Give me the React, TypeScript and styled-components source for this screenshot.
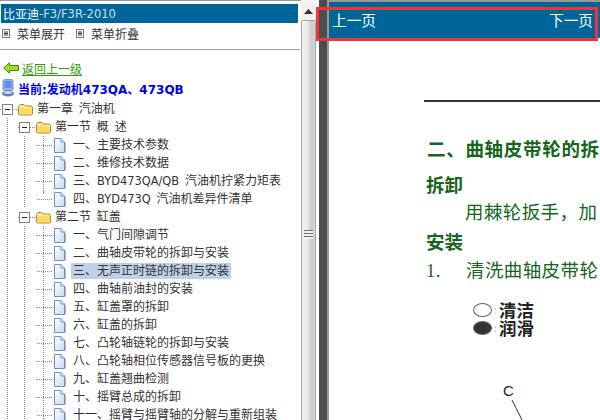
import React from "react";
import styled, { createGlobalStyle } from "styled-components";

const cjk = `"DejaVu Sans", "Noto Sans CJK SC", sans-serif`;
const pageFont = `"Liberation Serif", "Noto Sans CJK SC", serif`;
const dots = `linear-gradient(#8a8a8a 50%, transparent 50%)`;

const Global = createGlobalStyle`
  html, body { margin: 0; padding: 0; background: #fff; }
  a { color: inherit; }
`;

const Frame = styled.div`
  position: relative;
  display: flex;
  width: 600px;
  height: 420px;
  overflow: hidden;
  background: #fff;
  font: 12px ${cjk};
  color: #333;
`;

const Side = styled.div`
  flex: none;
  width: 301px;
  height: 420px;
  overflow: hidden;
  border-top: 1px solid #999;
  box-sizing: border-box;
`;

const TitleBar = styled.div`
  display: flex;
  align-items: center;
  height: 19px;
  margin: 3px 3px 0 1px;
  padding-left: 2px;
  background: #006699;
  color: #fff;
`;

const TitleLatin = styled.span`
  font-size: 11.5px;
  color: #cfe0ea;
`;

const MenuBar = styled.div`
  display: flex;
  align-items: center;
  height: 18px;
  margin-top: 1px;
  padding-left: 2px;
`;

const MenuItem = styled.span`
  display: flex;
  align-items: center;
  gap: 7px;
  margin-right: 11px;
`;

const Rule = styled.hr`
  height: 1px;
  margin: 7px 1px 0 0;
  border: 0;
  background: #a0a0a0;
`;

const BackRow = styled.div`
  display: flex;
  align-items: center;
  gap: 3px;
  height: 18px;
  margin-top: 9px;
  padding-left: 3px;
`;

const BackLink = styled.a`
  color: #339900;
  text-decoration: underline;
`;

const Current = styled.div`
  display: flex;
  align-items: center;
  gap: 3px;
  height: 18px;
  margin-top: 2px;
  padding-left: 1px;
  color: #0000ee;
  font-weight: 700;
`;

const Tree = styled.div`
  display: flex;
  flex-direction: column;
  margin-top: 3px;
`;

const Row = styled.div`
  display: flex;
  align-items: center;
  height: 18px;
  white-space: nowrap;
`;

const Guide = styled.span<{ $x: number }>`
  flex: none;
  align-self: stretch;
  width: 18px;
  background-image: ${dots};
  background-size: 1px 2px;
  background-repeat: repeat-y;
  background-position: ${(p) => p.$x}px 0;
`;

const Branch = styled.span<{ $last?: boolean }>`
  flex: none;
  align-self: stretch;
  width: 17px;
  background-image: ${dots}, linear-gradient(90deg, #8a8a8a 50%, transparent 50%);
  background-size: 1px 2px, 2px 1px;
  background-repeat: repeat-y, repeat-x;
  background-position: 7px 0, 7px 9px;
  ${(p) =>
    p.$last &&
    `background-size: 1px 9px, 2px 1px;
     background-repeat: no-repeat, repeat-x;`}
`;

const Expander = styled.span<{ $x: number }>`
  flex: none;
  display: flex;
  align-items: center;
  align-self: stretch;
  width: 18px;
  padding-left: ${(p) => p.$x}px;
  box-sizing: border-box;
  background-image: linear-gradient(90deg, #8a8a8a 50%, transparent 50%);
  background-size: 2px 1px;
  background-repeat: repeat-x;
  background-position: 0 9px;
`;

const Box = styled.span`
  position: relative;
  display: block;
  width: 9px;
  height: 9px;
  background: #fff;
  border: 1px solid #808080;
  &::after {
    content: "";
    position: absolute;
    left: 2px;
    top: 4px;
    width: 5px;
    height: 1px;
    background: #222;
  }
`;

const Label = styled.span<{ $on?: boolean; $gap?: number }>`
  display: inline-block;
  height: 16px;
  line-height: 16px;
  padding: 0 2px;
  margin-left: ${(p) => p.$gap ?? 5}px;
  word-spacing: 2px;
  background: ${(p) => (p.$on ? "#bfd0ea" : "transparent")};
`;

const Latin = styled.span`
  font-size: 11.4px;
`;

const Scrollbar = styled.div`
  flex: none;
  display: flex;
  flex-direction: column;
  width: 15px;
  height: 420px;
  padding-top: 3px;
  box-sizing: border-box;
  background: #f4f4f4;
`;

const ScrollButton = styled.div`
  display: flex;
  align-items: center;
  justify-content: center;
  flex: none;
  height: 17px;
  background: #f1f1f1;
`;

const Thumb = styled.div`
  flex: none;
  display: flex;
  align-items: center;
  justify-content: center;
  height: 428px;
  box-sizing: border-box;
  border: 1px solid #a6a6a6;
  border-radius: 2px 2px 0 0;
  background: linear-gradient(90deg, #f2f2f2 0%, #eaeaea 40%, #c9c9c9 75%, #d8d8d8 100%);
`;

const Grip = styled.div`
  width: 9px;
  height: 9px;
  background: repeating-linear-gradient(#6f6f6f 0 1px, #f2f2f2 1px 3px);
`;

const Divider = styled.div`
  flex: none;
  width: 8px;
  height: 420px;
  margin-left: 3px;
  background: #4d4d4d;
  border-right: 2px solid #9a9a9a;
`;

const Reader = styled.div`
  flex: 1;
  min-width: 0;
  height: 420px;
  overflow: hidden;
  white-space: nowrap;
  box-sizing: border-box;
  border-top: 2px solid #999;
`;

const PageBar = styled.div`
  display: flex;
  align-items: flex-start;
  justify-content: space-between;
  height: 36px;
  padding: 8px 7px 0 3px;
  box-sizing: border-box;
  background: #006699;
  color: #fff;
  font: 14.67px "Noto Sans CJK SC", sans-serif;
  line-height: 20px;
`;

const Sheet = styled.div`
  padding: 62px 0 0 95px;
  color: #14661a;
  font: 18.5px/26px ${pageFont};
`;

const TopLine = styled.div`
  height: 2px;
  background: #333;
`;

const Heading = styled.div`
  margin-top: 35px;
  font-weight: 700;
  height: 26px;
  padding-left: 3px;
  letter-spacing: 0.7px;
`;

const SubHeading = styled.div`
  margin-top: 10px;
  height: 26px;
  font-weight: 700;
  padding-left: 2px;
`;

const Para = styled.div`
  height: 20px;
  padding-left: 41px;
  margin-top: 1px;
  letter-spacing: 0.4px;
`;

const Step = styled.div`
  display: flex;
  height: 28px;
  margin-top: 2px;
  padding-left: 2px;
  letter-spacing: 0.4px;
`;

const StepNo = styled.span`
  width: 40px;
`;

const Legend = styled.div`
  display: flex;
  flex-direction: column;
  margin: 15px 0 0 49px;
  color: #222;
  font: 700 17.5px/18px "Noto Sans CJK SC", sans-serif;
`;

const LegendRow = styled.div`
  display: flex;
  align-items: center;
  height: 18px;
`;

const Dot = styled.span<{ $filled?: boolean }>`
  flex: none;
  width: 17px;
  height: 12px;
  border: 1px solid #666;
  border-radius: 50%;
  background: ${(p) => (p.$filled ? "#333" : "#fff")};
`;

const Colon = styled.span`
  width: 7px;
  text-align: center;
  color: #aaa;
  font-size: 10px;
  font-weight: 400;
`;

const Callout = styled.svg`
  display: block;
  margin: 45px 0 0 79px;
`;

const Highlight = styled.div`
  position: absolute;
  left: 316px;
  top: 7px;
  width: 282px;
  height: 34px;
  box-sizing: border-box;
  border: 3px solid #ef3636;
  pointer-events: none;
`;

const MenuIcon = () => (
  <svg width="8" height="9" viewBox="0 0 8 9">
    <rect x="0.5" y="0.5" width="7" height="8" fill="#fff" stroke="#777" />
    <path d="M2 3h4M2 4.5h4M2 6h4" stroke="#333" strokeWidth="1" />
  </svg>
);

const BackIcon = () => (
  <svg width="16" height="12" viewBox="0 0 16 12">
    <path d="M0.5 6 6.5 0.8V3.5H15.5V8.5H6.5V11.2Z" fill="#9fdc1e" stroke="#3f8f10" strokeWidth="1" />
  </svg>
);

const ComputerIcon = () => (
  <svg width="14" height="18" viewBox="0 0 14 18">
    <rect x="2" y="0.5" width="10" height="11" rx="1.5" fill="#8fb2ee" stroke="#8a94b4" />
    <rect x="3.5" y="2" width="7" height="7" fill="#5f8fe6" />
    <ellipse cx="7" cy="14.5" rx="6" ry="3" fill="#5577c8" />
    <ellipse cx="7" cy="13.5" rx="4" ry="1.5" fill="#cfd6e6" />
  </svg>
);

const FolderIcon = () => (
  <svg width="15" height="13" viewBox="0 0 15 13">
    <path d="M0.5 3.5 2 1.5H6L7.5 3H13.5L14.5 4.5V11L13.5 12H1.5L0.5 11Z" fill="#ffe88a" stroke="#a88a32" />
    <path d="M1.5 5.5H13.5V10.5H1.5Z" fill="#ffd75a" />
  </svg>
);

const DocIcon = () => (
  <svg width="13" height="15" viewBox="0 0 13 15">
    <defs>
      <linearGradient id="doc" x1="0" y1="0" x2="1" y2="1">
        <stop offset="0" stopColor="#ffffff" />
        <stop offset="1" stopColor="#c4d9f6" />
      </linearGradient>
    </defs>
    <path d="M1.5 0.5H8L11.5 4V14.5H1.5Z" fill="url(#doc)" stroke="#6e8fc8" />
    <path d="M8 0.5V4H11.5" fill="#eaf2fd" stroke="#6e8fc8" />
    <path d="M12.5 5V14.5" stroke="#b8b8b8" />
  </svg>
);

type Leaf = { pre: string; latin?: string; rest?: string; on?: boolean; last?: boolean };

const first: Leaf[] = [
  { pre: "一、主要技术参数" },
  { pre: "二、维修技术数据" },
  { pre: "三、", latin: "BYD473QA/QB", rest: " 汽油机拧紧力矩表" },
  { pre: "四、", latin: "BYD473Q", rest: " 汽油机差异件清单", last: true },
];

const second: Leaf[] = [
  { pre: "一、气门间隙调节" },
  { pre: "二、曲轴皮带轮的拆卸与安装" },
  { pre: "三、无声正时链的拆卸与安装", on: true },
  { pre: "四、曲轴前油封的安装" },
  { pre: "五、缸盖罩的拆卸" },
  { pre: "六、缸盖的拆卸" },
  { pre: "七、凸轮轴链轮的拆卸与安装" },
  { pre: "八、凸轮轴相位传感器信号板的更换" },
  { pre: "九、缸盖翘曲检测" },
  { pre: "十、摇臂总成的拆卸" },
  { pre: "十一、摇臂与摇臂轴的分解与重新组装" },
];

const LeafRow = ({ leaf }: { leaf: Leaf }) => (
  <Row>
    <Guide $x={7} />
    <Guide $x={6} />
    <Branch $last={leaf.last} />
    <DocIcon />
    <Label $on={leaf.on}>
      {leaf.pre}
      {leaf.latin && <Latin>{leaf.latin}</Latin>}
      {leaf.rest}
    </Label>
  </Row>
);

const SectionRow = ({ title }: { title: string }) => (
  <Row>
    <Guide $x={7} />
    <Expander $x={1}>
      <Box />
    </Expander>
    <FolderIcon />
    <Label $gap={2}>{title}</Label>
  </Row>
);

export default function App() {
  return (
    <Frame>
      <Global />
      <Side>
        <TitleBar>
          比亚迪<TitleLatin>-F3/F3R-2010</TitleLatin>
        </TitleBar>
        <MenuBar>
          <MenuItem>
            <MenuIcon />
            菜单展开
          </MenuItem>
          <MenuItem>
            <MenuIcon />
            菜单折叠
          </MenuItem>
        </MenuBar>
        <Rule />
        <BackRow>
          <BackIcon />
          <BackLink>返回上一级</BackLink>
        </BackRow>
        <Current>
          <ComputerIcon />
          <span>当前:发动机473QA、473QB</span>
        </Current>
        <Tree>
          <Row>
            <Expander $x={2}>
              <Box />
            </Expander>
            <FolderIcon />
            <Label $gap={2}>第一章 汽油机</Label>
          </Row>
          <SectionRow title="第一节 概 述" />
          {first.map((leaf) => (
            <LeafRow key={leaf.pre} leaf={leaf} />
          ))}
          <SectionRow title="第二节 缸盖" />
          {second.map((leaf) => (
            <LeafRow key={leaf.pre} leaf={leaf} />
          ))}
        </Tree>
      </Side>
      <Scrollbar>
        <ScrollButton>
          <svg width="9" height="5" viewBox="0 0 9 5">
            <path d="M0 5 4.5 0 9 5Z" fill="#333" />
          </svg>
        </ScrollButton>
        <Thumb>
          <Grip />
        </Thumb>
      </Scrollbar>
      <Divider />
      <Reader>
        <PageBar>
          <span>上一页</span>
          <span>下一页</span>
        </PageBar>
        <Sheet>
          <TopLine />
          <Heading>二、曲轴皮带轮的拆</Heading>
          <SubHeading>拆卸</SubHeading>
          <Para>用棘轮扳手，加</Para>
          <SubHeading>安装</SubHeading>
          <Step>
            <StepNo>1.</StepNo>
            清洗曲轴皮带轮
          </Step>
          <Legend>
            <LegendRow>
              <Dot />
              <Colon>:</Colon>
              清洁
            </LegendRow>
            <LegendRow>
              <Dot $filled />
              <Colon>:</Colon>
              润滑
            </LegendRow>
          </Legend>
          <Callout width="30" height="40" viewBox="0 0 30 40">
            <text x="0" y="14" fontSize="15" fontFamily="Liberation Sans" fill="#222">
              C
            </text>
            <path d="M9 18 20 40" stroke="#333" strokeWidth="1" fill="none" />
          </Callout>
        </Sheet>
      </Reader>
      <Highlight />
    </Frame>
  );
}
